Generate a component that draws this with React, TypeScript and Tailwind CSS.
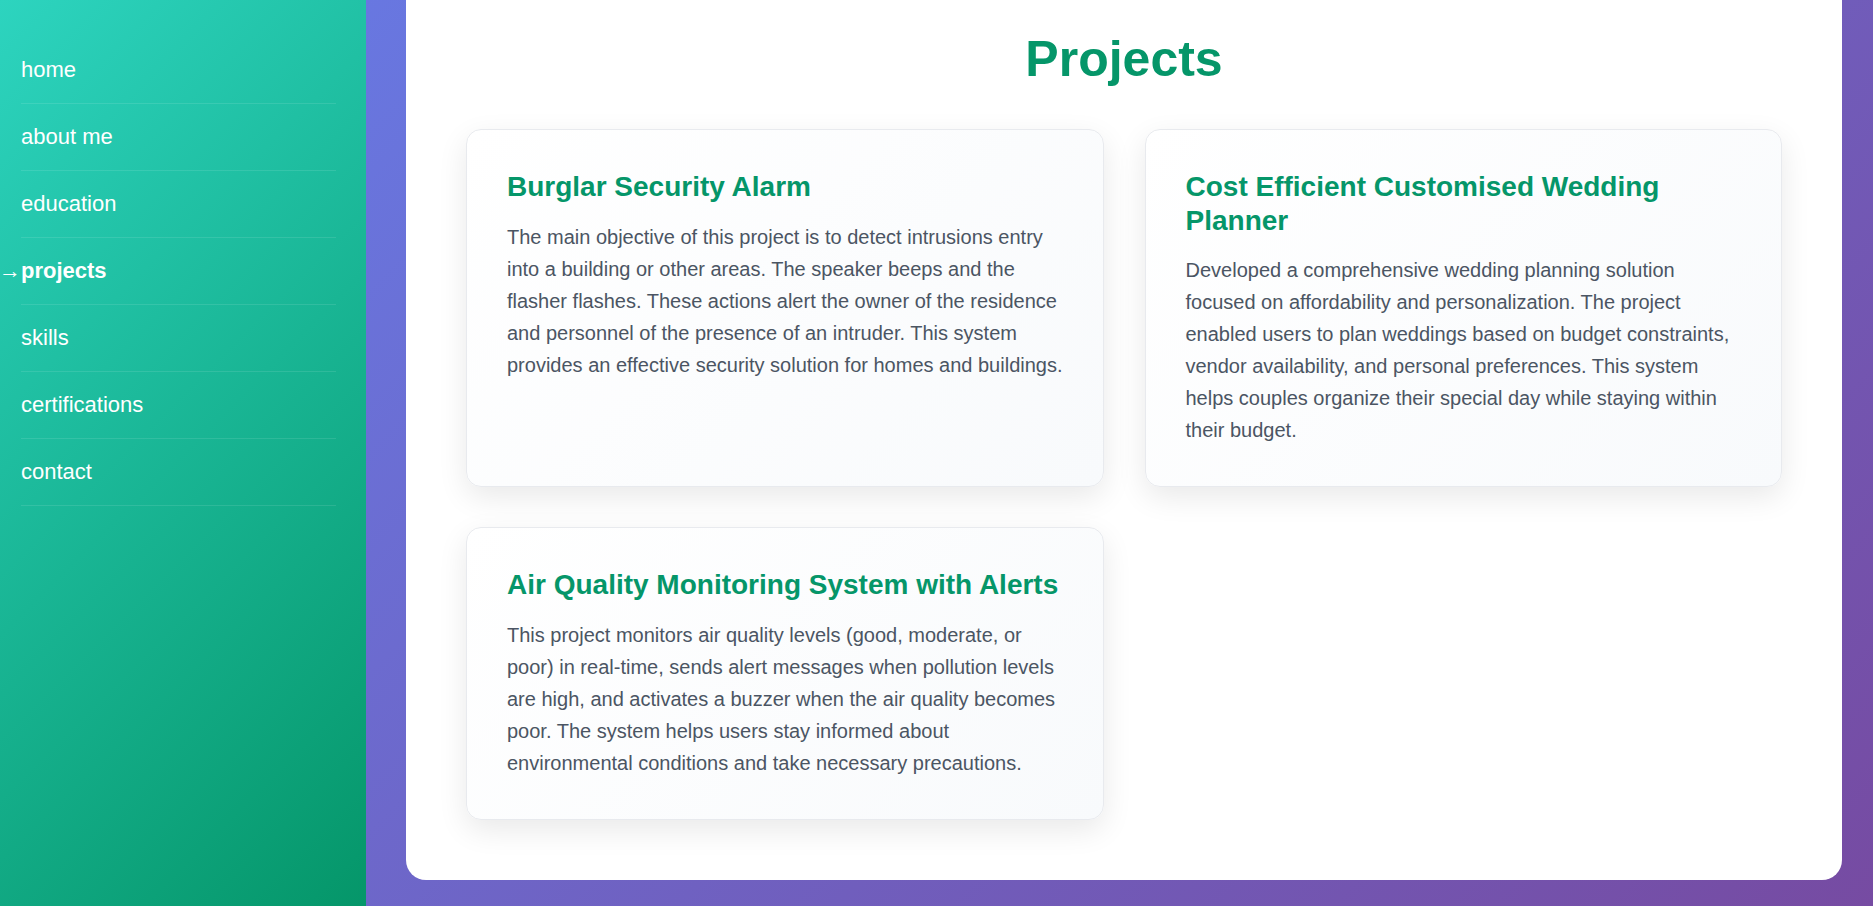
import React from "react";

const nav = ["home", "about me", "education", "projects", "skills", "certifications", "contact"];

const projects = [
  {
    title: "Burglar Security Alarm",
    desc: "The main objective of this project is to detect intrusions entry into a building or other areas. The speaker beeps and the flasher flashes. These actions alert the owner of the residence and personnel of the presence of an intruder. This system provides an effective security solution for homes and buildings.",
  },
  {
    title: "Cost Efficient Customised Wedding Planner",
    desc: "Developed a comprehensive wedding planning solution focused on affordability and personalization. The project enabled users to plan weddings based on budget constraints, vendor availability, and personal preferences. This system helps couples organize their special day while staying within their budget.",
  },
  {
    title: "Air Quality Monitoring System with Alerts",
    desc: "This project monitors air quality levels (good, moderate, or poor) in real-time, sends alert messages when pollution levels are high, and activates a buzzer when the air quality becomes poor. The system helps users stay informed about environmental conditions and take necessary precautions.",
  },
];

export default function App() {
  return (
    <div
      className="flex h-[906px] w-full overflow-hidden bg-[linear-gradient(135deg,#667eea_0%,#764ba2_100%)]"
      style={{ fontFamily: '"Liberation Sans", Arial, sans-serif' }}
    >
      <aside className="w-[366px] shrink-0 bg-[linear-gradient(135deg,#2dd4bf_0%,#059669_100%)] pt-[37px] pl-[21px] pr-[30px]">
        <nav className="flex flex-col">
          {nav.map((item) => {
            const active = item === "projects";
            return (
              <a
                key={item}
                className={
                  "relative block border-b border-white/10 py-[20px] text-[22px] leading-[26px] text-white " +
                  (active ? "font-bold" : "font-normal")
                }
              >
                {active && (
                  <span className="absolute right-full top-[20px] font-normal">→</span>
                )}
                {item}
              </a>
            );
          })}
        </nav>
      </aside>
      <main className="flex-1 pl-[40px] pr-[31px] pb-[26px] flex flex-col">
        <section className="flex-1 rounded-b-[20px] bg-white px-[60px] pt-[29px] pb-[60px]">
          <h1 className="mb-[40px] text-center text-[50px] font-bold leading-[1.2] text-[#059669]">
            Projects
          </h1>
          <div className="grid grid-cols-2 gap-x-[41px] gap-y-[40px]">
            {projects.map((p) => (
              <div
                key={p.title}
                className="rounded-[15px] border border-[#e8eaee] bg-[linear-gradient(135deg,#ffffff_0%,#f8fafc_100%)] py-[40px] pl-[40px] pr-[36px] shadow-[0_10px_30px_rgba(0,0,0,0.09)]"
              >
                <h3 className="mb-[17px] text-[28px] font-bold leading-[1.2] text-[#059669]">
                  {p.title}
                </h3>
                <p className="text-[20px] leading-[32px] text-[#4b5563]">{p.desc}</p>
              </div>
            ))}
          </div>
        </section>
      </main>
    </div>
  );
}
